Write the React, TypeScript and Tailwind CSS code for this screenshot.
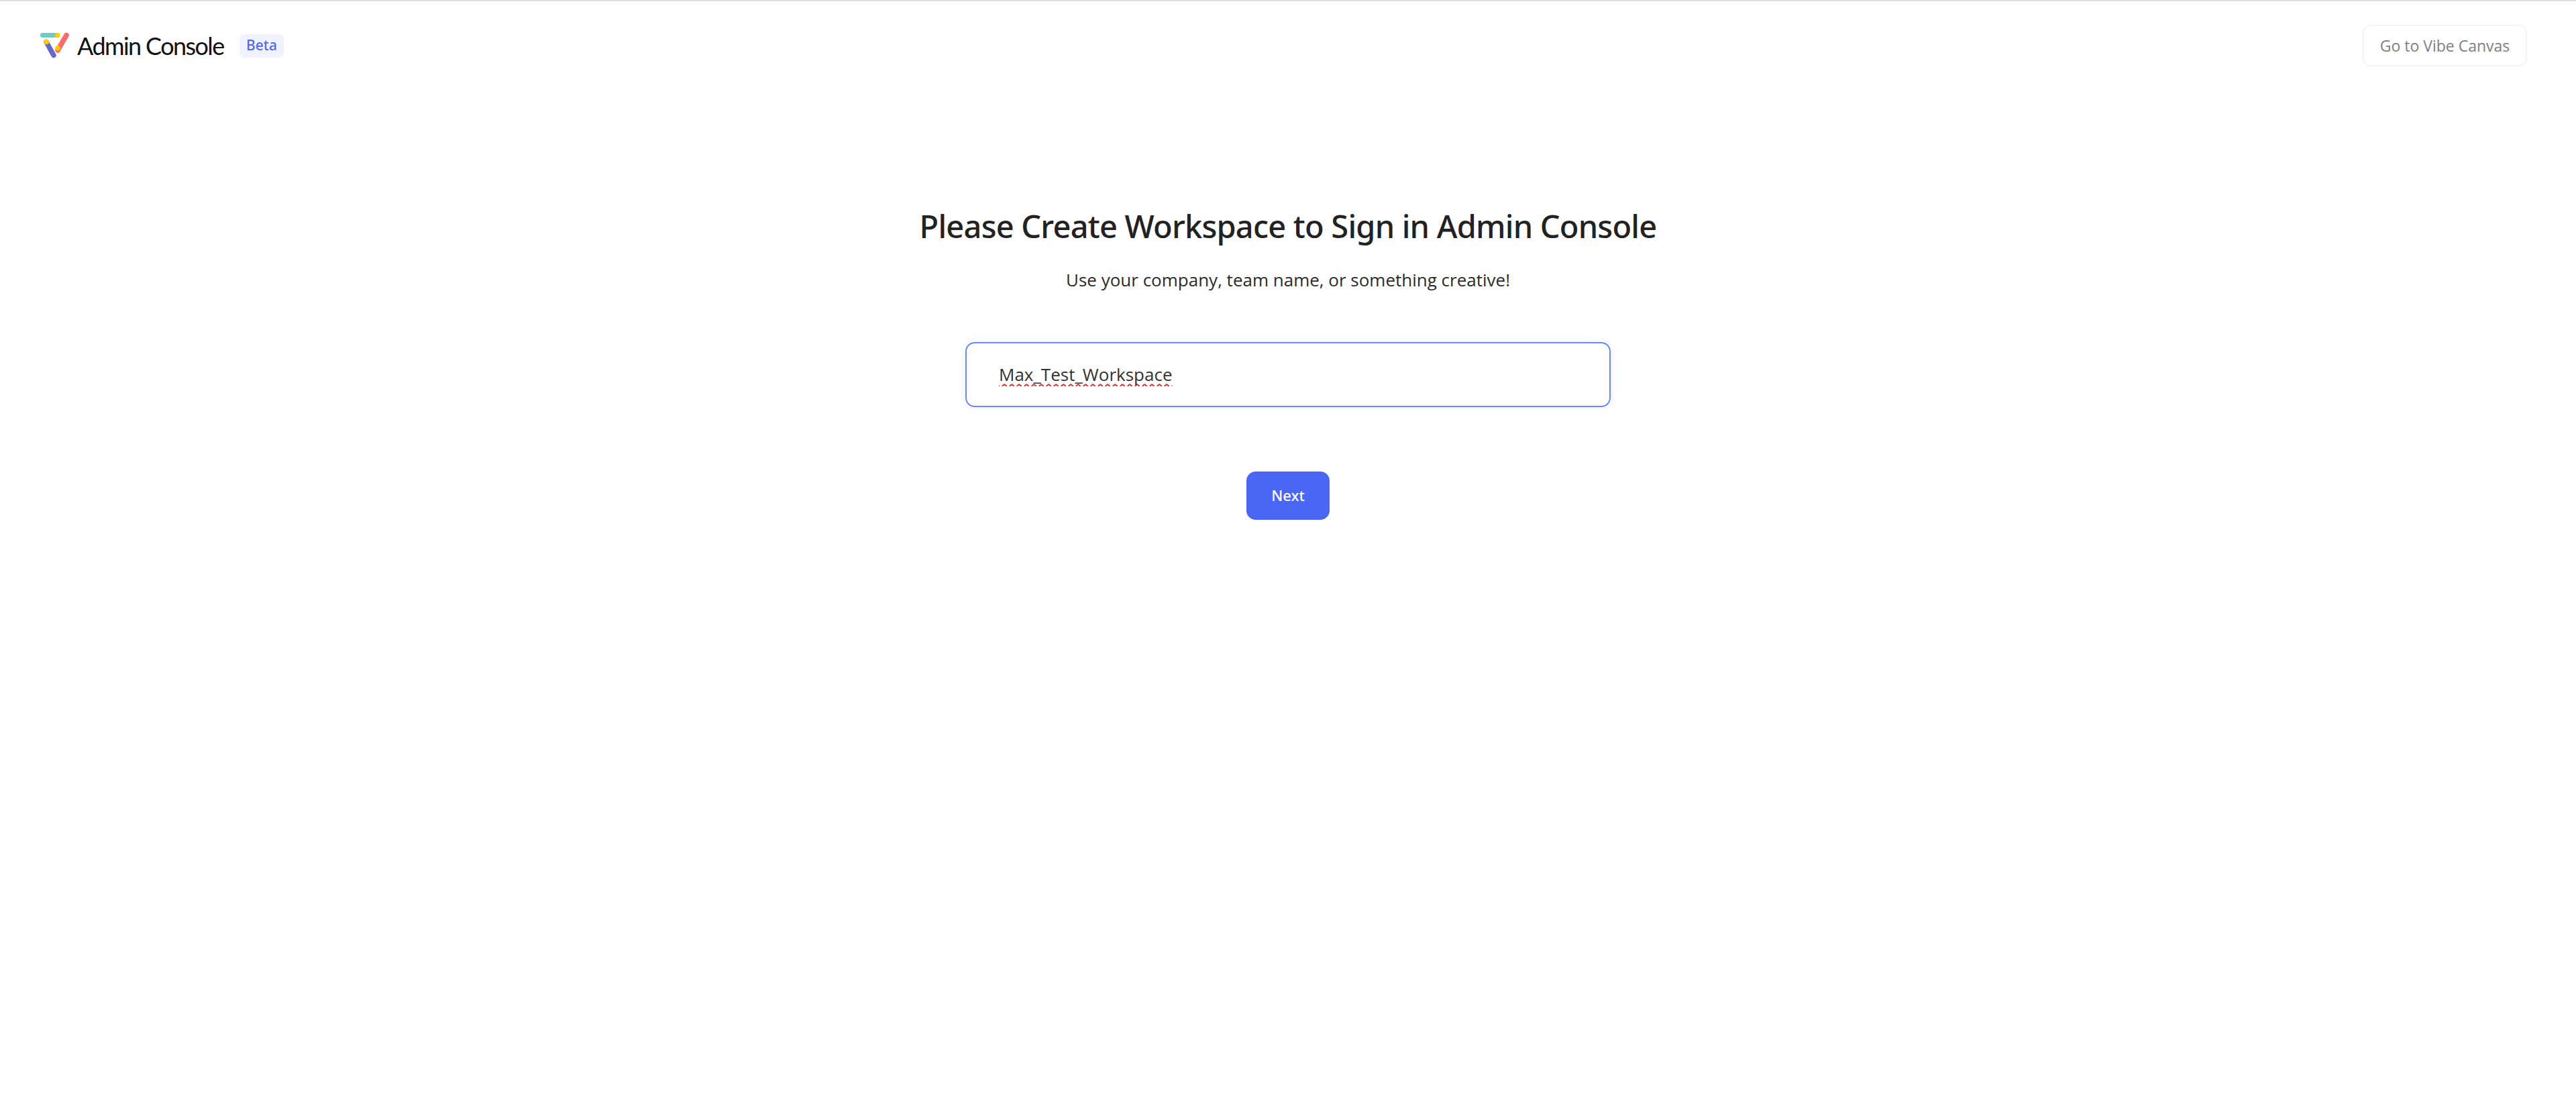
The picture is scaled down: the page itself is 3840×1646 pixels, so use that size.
import React from 'react';

const Logo: React.FC = () => (
  <svg width="44" height="40" viewBox="0 0 44 40" fill="none" className="shrink-0">
    <path d="M3.5 4.5H25" stroke="#6ACDCB" strokeWidth="7" strokeLinecap="round" />
    <path d="M39 4.5L26 27" stroke="#FF6B6B" strokeWidth="7.5" strokeLinecap="round" />
    <path d="M9 14.5L20 34.5" stroke="#6767CC" strokeWidth="7.5" strokeLinecap="round" />
    <circle cx="25.7" cy="4.5" r="3.7" fill="#FFCC00" />
    <circle cx="26" cy="23.8" r="3.8" fill="#FFCC00" />
    <circle cx="9.3" cy="14.5" r="3.8" fill="#FFCC00" />
  </svg>
);

export default function App() {
  return (
    <div className="min-h-screen bg-white border-t-2 border-[#dedede] font-['Open_Sans','Noto_Sans',sans-serif]">
      <header className="flex items-center justify-between pl-[60px] pr-[73px] pt-[35px]">
        <div className="flex items-center">
          <Logo />
          <span className="ml-[11px] w-[218px] whitespace-nowrap font-['Lato',sans-serif] text-[36px] leading-[48px] tracking-[-1.6px] text-[#111111]">Admin Console</span>
          <span className="ml-6 h-[35px] w-[66px] justify-center flex items-center rounded-lg bg-[#f0f3ff] font-['Noto_Sans',sans-serif] text-[21px] font-medium text-[#4c68f6]">Beta</span>
        </div>
        <button className="h-[62px] w-[245px] rounded-xl border-2 border-[#f4f4f4] bg-white text-[23px] text-[#7f7f7f]">Go to Vibe Canvas</button>
      </header>
      <main className="flex flex-col items-center pt-[203px]">
        <h1 className="font-['Noto_Sans',sans-serif] text-[47px] leading-[70px] font-medium tracking-[-0.8px] text-[#222222]">Please Create Workspace to Sign in Admin Console</h1>
        <p className="mt-[25px] text-[26px] leading-[40px] text-[#2b2b2b]">Use your company, team name, or something creative!</p>
        <input
          defaultValue="Max_Test_Workspace"
          spellCheck={false}
          className="mt-[73px] h-[97px] w-[962px] rounded-[14px] border-2 border-[#6f86f8] pl-[48px] pr-[48px] pb-[2px] text-[26px] text-[#333333] underline decoration-wavy decoration-[#f02020] decoration-[1.5px] underline-offset-[4px] [text-decoration-skip-ink:none] outline-none shadow-[0_0_12px_rgba(76,104,246,0.12)]"
        />
        <button className="mt-[96px] h-[72px] w-[124px] rounded-[14px] bg-[#4a66f5] pb-[2px] font-['Noto_Sans',sans-serif] text-[22px] font-medium text-white">Next</button>
      </main>
    </div>
  );
}
